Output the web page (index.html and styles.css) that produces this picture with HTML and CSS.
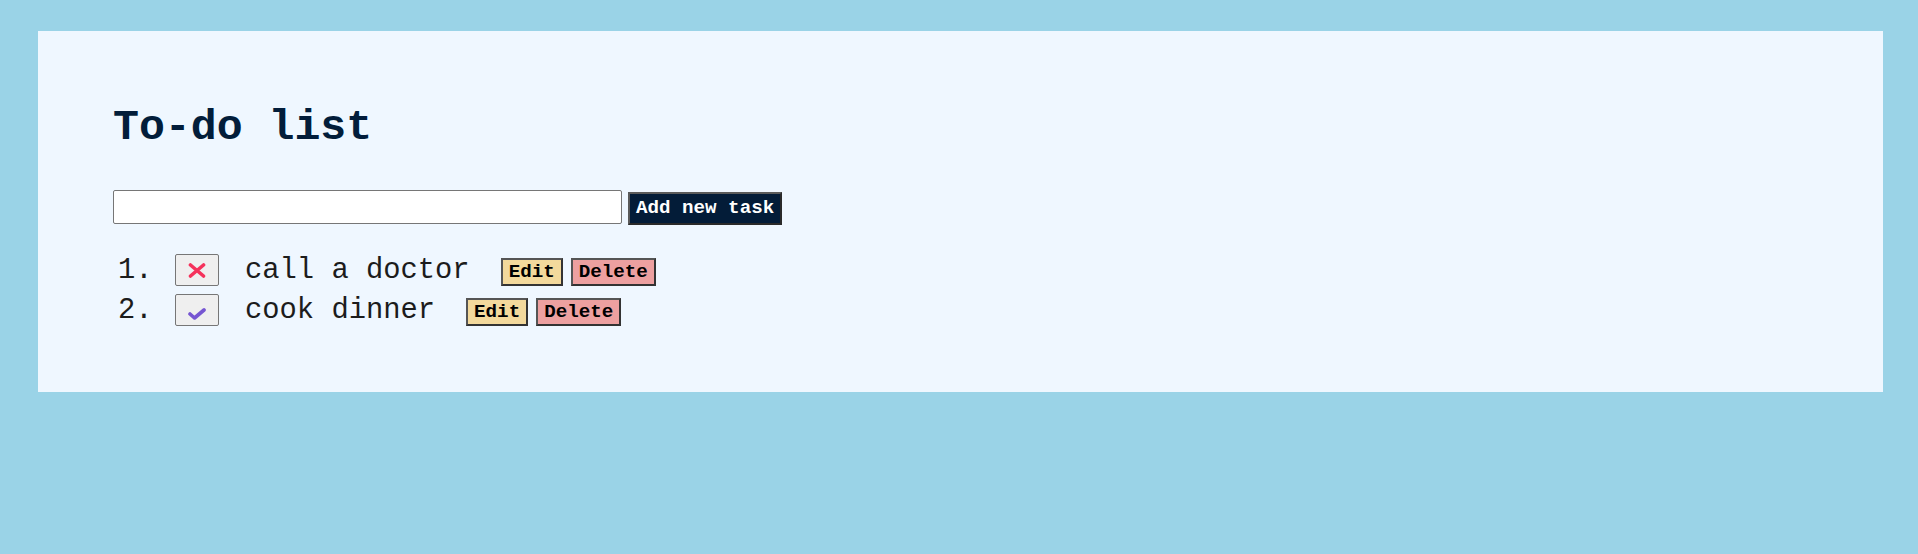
FILE: index.html
```html
<!DOCTYPE html>
<html lang="en">
<head>
<meta charset="utf-8">
<title>To-do list</title>
<link rel="stylesheet" href="styles.css">
</head>
<body>
<main class="card">
  <h1 class="title">To-do list</h1>
  <form class="add-form">
    <input class="task-input" type="text" aria-label="New task">
    <button class="add-btn" type="button">Add new task</button>
  </form>
  <ol class="tasks">
    <li class="task">
      <button class="toggle" type="button" aria-label="Not done">
        <svg width="18" height="15" viewBox="0 0 18 15"><path d="M2.5 2 L15.5 13 M15.5 2 L2.5 13" stroke="#f5325b" stroke-width="3.6" stroke-linecap="round" fill="none"/></svg>
      </button>
      <span class="task-text">call a doctor</span>
      <span class="actions">
        <button class="edit-btn" type="button">Edit</button>
        <button class="delete-btn" type="button">Delete</button>
      </span>
    </li>
    <li class="task">
      <button class="toggle" type="button" aria-label="Done">
        <svg class="check" width="20" height="13" viewBox="0 0 20 13"><path d="M3 7 L7.5 11 L17 3" stroke="#7656d2" stroke-width="3.6" stroke-linecap="round" stroke-linejoin="round" fill="none"/></svg>
      </button>
      <span class="task-text">cook dinner</span>
      <span class="actions">
        <button class="edit-btn" type="button">Edit</button>
        <button class="delete-btn" type="button">Delete</button>
      </span>
    </li>
  </ol>
</main>
</body>
</html>
```

FILE: styles.css
```css
html, body {
  margin: 0;
  padding: 0;
}

body {
  background: #9ad3e7;
  font-family: "Liberation Mono", "Courier New", monospace;
  min-height: 554px;
}

.card {
  display: block;
  background: #eff7ff;
  margin: 31px 35px 0 38px;
  padding: 72px 75px 62px 75px;
}

.title {
  margin: 0;
  font-size: 43.2px;
  line-height: normal;
  font-weight: bold;
  color: #021d3a;
}

.add-form {
  display: flex;
  align-items: center;
  gap: 6px;
  margin-top: 37px;
  height: 35px;
}

.task-input {
  box-sizing: border-box;
  width: 509px;
  height: 34px;
  margin: 0;
  border: 1px solid #767676;
  border-radius: 2px;
  background: #fff;
  padding: 2px 4px;
  font-size: 16px;
}

.add-btn {
  box-sizing: border-box;
  height: 33px;
  margin: 3px 0 0 0;
  padding: 2px 6px;
  background: #031c38;
  color: #fff;
  font-family: "Liberation Mono", "Courier New", monospace;
  font-weight: bold;
  font-size: 19.2px;
  border: 2px solid;
  border-color: #5a5a5a #2a2a2a #2a2a2a #5a5a5a;
  border-radius: 0;
}

.tasks {
  list-style: none;
  counter-reset: item;
  margin: 26px 0 0 0;
  padding: 0;
}

.task {
  counter-increment: item;
  display: flex;
  align-items: center;
  height: 40px;
  font-size: 28.8px;
  color: #1c1c1c;
}

.task::before {
  content: counter(item) ".";
  width: 57px;
  padding-left: 5px;
  flex: none;
}

.toggle {
  box-sizing: border-box;
  width: 44px;
  height: 32px;
  margin: 0;
  padding: 0;
  display: flex;
  align-items: center;
  justify-content: center;
  background: #efefef;
  border: 1px solid #767676;
  border-radius: 2px;
}

.check {
  margin-top: 6px;
}

.task-text {
  margin-left: 26px;
  white-space: pre;
}

.actions {
  display: flex;
  gap: 8px;
  margin-left: 31px;
  margin-top: 4px;
}

.edit-btn,
.delete-btn {
  box-sizing: border-box;
  height: 28px;
  margin: 0;
  padding: 1px 6px;
  font-family: "Liberation Mono", "Courier New", monospace;
  font-weight: bold;
  font-size: 19.2px;
  color: #000;
  border: 2px solid;
  border-color: #555 #333 #333 #555;
  border-radius: 0;
}

.edit-btn {
  background: #f3d99c;
}

.delete-btn {
  background: #eda0a0;
}
```
